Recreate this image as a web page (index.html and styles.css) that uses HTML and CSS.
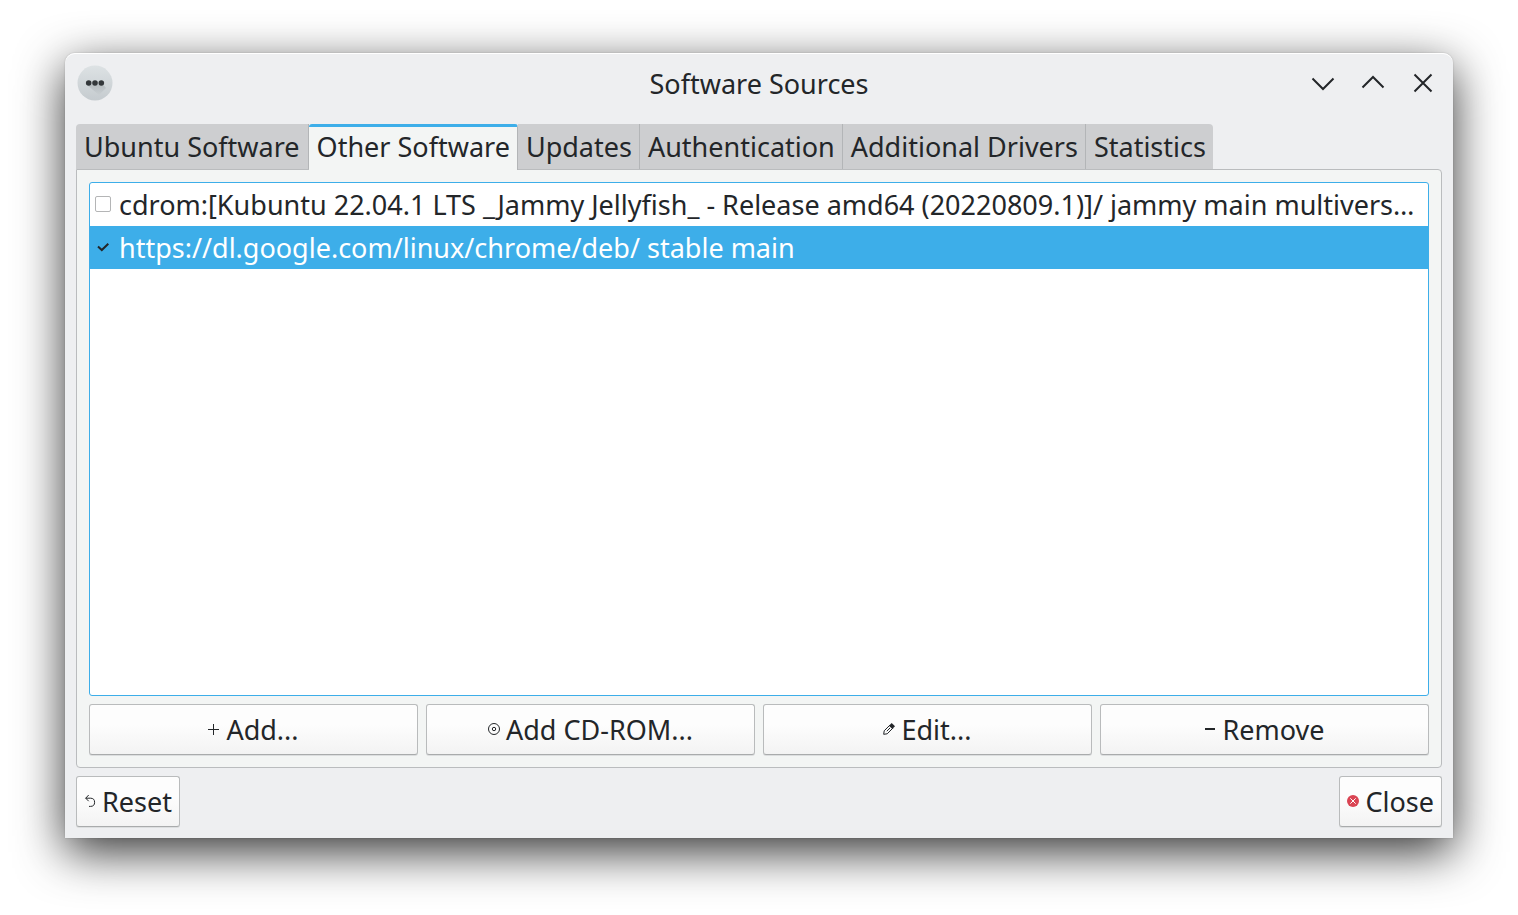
FILE: index.html
```html
<!DOCTYPE html>
<html lang="en">
<head>
<meta charset="utf-8">
<title>Software Sources</title>
<link rel="stylesheet" href="styles.css">
</head>
<body>
<main class="window">
  <header class="titlebar">
    <button class="app-menu" aria-label="Window menu">
      <svg width="36" height="36" viewBox="0 0 36 36">
        <defs>
          <linearGradient id="disc" x1="0" y1="0" x2="0" y2="1"><stop offset="0" stop-color="#dde2e4"/><stop offset="1" stop-color="#c5cbcf"/></linearGradient>
          <linearGradient id="shade" x1="0" y1="0" x2="0" y2="1"><stop offset="0" stop-color="#9ea4a8"/><stop offset="1" stop-color="#c8ced1"/></linearGradient>
        </defs>
        <circle cx="18" cy="18" r="17.500" fill="url(#disc)"/>
        <path d="M10 20 L26 19.500 L29 23 L22 30 Z" fill="url(#shade)" opacity=".5"/>
        <circle cx="11.700" cy="18" r="2.800" fill="#33373a"/><circle cx="18" cy="18" r="2.800" fill="#33373a"/><circle cx="24.300" cy="18" r="2.800" fill="#33373a"/>
      </svg>
    </button>
    <h1 class="title">Software Sources</h1>
    <div class="controls">
      <button class="control" aria-label="Minimize"><svg width="26" height="26" viewBox="0 0 26 26"><path d="M2.500 8.500 L13 19 L23.500 8.500"/></svg></button>
      <button class="control" aria-label="Maximize"><svg width="26" height="26" viewBox="0 0 26 26"><path d="M2.500 17.500 L13 7 L23.500 17.500"/></svg></button>
      <button class="control" aria-label="Close window"><svg width="26" height="26" viewBox="0 0 26 26"><path d="M4.500 4.500 L21.500 21.500 M21.500 4.500 L4.500 21.500"/></svg></button>
    </div>
  </header>

  <nav class="tabs" role="tablist">
    <button class="tab" role="tab">Ubuntu Software</button>
    <button class="tab active" role="tab" aria-selected="true">Other Software</button>
    <button class="tab" role="tab">Updates</button>
    <button class="tab" role="tab">Authentication</button>
    <button class="tab" role="tab">Additional Drivers</button>
    <button class="tab" role="tab">Statistics</button>
  </nav>

  <section class="panel">
    <div class="sources">
      <label class="source"><span class="check-wrap"><input class="check" type="checkbox"></span><span class="source-name">cdrom:[Kubuntu 22.04.1 LTS _Jammy Jellyfish_ - Release amd64 (20220809.1)]/ jammy main multivers…</span></label>
      <label class="source selected"><span class="check-wrap"><input class="check" type="checkbox" checked><svg class="tick" width="16" height="16" viewBox="0 0 16 16"><path d="M3 7.500 L6.800 11 L13.300 4.700"/></svg></span><span class="source-name">https://dl.google.com/linux/chrome/deb/ stable main</span></label>
    </div>
    <div class="actions">
      <button class="button"><svg class="icon" width="12" height="12" viewBox="0 0 12 12"><path d="M5.500 1 V12 M0 6.500 H11"/></svg>Add...</button>
      <button class="button"><svg class="icon" width="12" height="12" viewBox="0 0 12 12"><circle cx="6" cy="6" r="5.500"/><circle cx="6" cy="6" r="1.700"/></svg>Add CD-ROM...</button>
      <button class="button"><svg class="icon" width="12" height="12" viewBox="0 0 12 12"><path d="M.7 11.300 L1.200 7.800 L6.800 2.200 L9.800 5.200 L4.200 10.800 Z M3.800 8.200 L7 5"/><path class="solid" d="M6 2.700 L8.700 0 L12 3.300 L9.300 6 Z"/></svg>Edit...</button>
      <button class="button"><svg class="icon" width="12" height="12" viewBox="0 0 12 12"><path class="thick" d="M1 6 H11"/></svg>Remove</button>
    </div>
  </section>

  <footer class="footer">
    <button class="button"><svg class="icon" width="12" height="12" viewBox="0 0 12 12"><path d="M4.700 0 L1.700 3.200 L4.700 6.200 M1.700 3.200 H6.500 A4.100 4.100 0 0 1 6.500 11.400 H5"/></svg>Reset</button>
    <button class="button"><svg class="icon" width="12" height="12" viewBox="0 0 12 12"><circle class="red" cx="6" cy="6" r="6"/><path class="cross" d="M3.300 3.300 L8.700 8.700 M8.700 3.300 L3.300 8.700"/></svg>Close</button>
  </footer>
</main>
</body>
</html>
```
FILE: styles.css
```css
* { box-sizing: border-box; }

body {
  margin: 0;
  min-height: 100vh;
  padding: 53px 65px 77px;
  display: flex;
  background: #fff;
  color: #232629;
  font: 27px/38px "Noto Sans", sans-serif;
}

button {
  margin: 0;
  font: inherit;
  color: inherit;
}

.window {
  flex: 1;
  min-width: 0;
  display: flex;
  flex-direction: column;
  padding: 0 11px 11px;
  background: #eeeff1;
  border-radius: 10px 10px 0 0;
  box-shadow: inset 0 1px #fff, 0 14px 48px rgba(0, 0, 0, .8), 0 0 2px rgba(0, 0, 0, .2);
}

.titlebar {
  display: grid;
  grid-template-columns: 1fr auto 1fr;
  align-items: center;
  height: 60px;
  margin-bottom: 11px;
}

.title {
  margin: 0;
  padding-top: 2px;
  font-size: 27px;
  font-weight: 400;
}

.app-menu,
.control {
  padding: 0;
  border: 0;
  background: none;
}

.app-menu { justify-self: start; margin-left: 1px; }

.app-menu svg,
.control svg { display: block; }

.controls {
  display: flex;
  justify-content: flex-end;
  gap: 24px;
  padding-right: 6px;
}

.control svg { fill: none; stroke: #232629; stroke-width: 2; }

.tabs { display: flex; height: 45px; }

.tab {
  padding: 0 7px 0 8px;
  border: 0;
  border-right: 1px solid #b3b5b7;
  background: #cdced0;
  white-space: nowrap;
}

.tab:first-child { padding-right: 8px; border-top-left-radius: 4px; }
.tab:last-child { border-right: 0; border-top-right-radius: 4px; }

.tab.active {
  position: relative;
  height: 46px;
  padding-bottom: 4px;
  border-top: 3px solid #3daee9;
  border-radius: 3px 3px 0 0;
  background: #f3f5f4;
}

.panel {
  flex: 1;
  display: flex;
  flex-direction: column;
  gap: 8px;
  padding: 12px;
  border: 1px solid #babcbe;
  border-radius: 0 4px 4px 4px;
  background: #f3f5f4;
}

.sources {
  flex: 1;
  border: 1px solid #3daee9;
  border-radius: 3px;
  background: #fff;
}

.source {
  display: flex;
  align-items: center;
  gap: 8px;
  height: 43px;
  padding: 0 8px 0 5px;
}

.source.selected { background: #3daee9; color: #fff; }

.source-name {
  flex: 1;
  min-width: 0;
  overflow: hidden;
  text-overflow: ellipsis;
  white-space: nowrap;
}

.check {
  appearance: none;
  display: block;
  width: 16px;
  height: 16px;
  margin: 0;
  border: 1px solid #b4b5b6;
  border-radius: 2px;
  background: #fff;
}

.check:checked { border-color: transparent; background: none; }

.check-wrap { position: relative; flex: none; margin-bottom: 2px; }

.tick {
  position: absolute;
  inset: 0;
  fill: none;
  stroke: #232629;
  stroke-width: 2;
}

.actions {
  display: grid;
  grid-template-columns: repeat(4, 1fr);
  gap: 8px;
}

.button {
  display: flex;
  align-items: center;
  justify-content: center;
  gap: 6px;
  height: 51px;
  padding: 0 7px;
  border: 1px solid #b9bbbc;
  border-bottom-color: #a9abac;
  border-radius: 3px;
  background: linear-gradient(#fdfdfd 40%, #f3f3f3);
  box-shadow: 0 1px #dcdedf;
}

.icon {
  flex: none;
  margin-bottom: 2px;
  fill: none;
  stroke: #232629;
  stroke-width: 1;
}

.icon .solid { fill: #232629; stroke: none; }
.icon .thick { stroke-width: 2; }
.icon .red { fill: #da4453; stroke: none; }
.icon .cross { stroke: #fff; }

.footer {
  display: flex;
  justify-content: space-between;
  margin-top: 8px;
}
```
